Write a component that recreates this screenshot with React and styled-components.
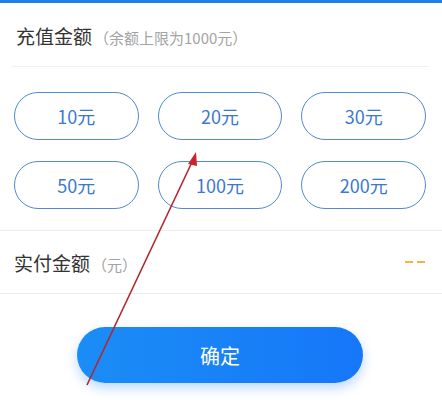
import React from 'react'
import styled, { createGlobalStyle } from 'styled-components'

const GlobalStyle = createGlobalStyle`
  body {
    margin: 0;
    background: #fff;
    font-family: "Noto Sans CJK SC", "Noto Sans", sans-serif;
  }
`

const Page = styled.div`
  position: relative;
  width: 442px;
  height: 414px;
  overflow: hidden;
  background: #fff;
`

const TopLine = styled.div`
  height: 3px;
  background: #1f7fe6;
`

const Header = styled.div`
  display: flex;
  align-items: baseline;
  height: 64px;
  box-sizing: border-box;
  margin: 0 13px 0 12px;
  padding: 19px 0 0 4px;
  border-bottom: 1px solid #f0f0f0;
`

const Title = styled.span`
  font-size: 19px;
  color: #333;
`

const Hint = styled.span`
  font-size: 15px;
  color: #a3a3a3;
  margin-left: 2px;
`

const AmountGrid = styled.div`
  display: grid;
  grid-template-columns: repeat(3, 1fr);
  column-gap: 19px;
  row-gap: 21px;
  padding: 25px 16px 21px 14px;
  border-bottom: 1px solid #ededed;
`

const AmountButton = styled.button`
  height: 48px;
  border: 1.8px solid #5089d6;
  border-radius: 24px;
  background: #fff;
  color: #3b78d0;
  font-family: inherit;
  font-size: 18px;
  padding: 0;
`

const PayRow = styled.div`
  display: flex;
  align-items: center;
  justify-content: space-between;
  height: 62px;
  padding: 0 17px 0 14px;
  border-bottom: 1px solid #ededed;
`

const PayLabel = styled.div`
  display: flex;
  align-items: baseline;
`

const PayValue = styled.span`
  display: flex;
  gap: 4px;
`

const Dash = styled.span`
  width: 8px;
  height: 2px;
  background: #f4b53a;
`

const Footer = styled.div`
  display: flex;
  justify-content: center;
  padding-top: 33px;
  padding-right: 2px;
`

const Confirm = styled.button`
  width: 286px;
  height: 56px;
  border: none;
  border-radius: 28px;
  background: linear-gradient(90deg, #1b8df6 0%, #1677f8 100%);
  box-shadow: 0 5px 12px rgba(30, 130, 250, 0.3);
  color: #fff;
  font-family: inherit;
  font-size: 20px;
`

const Annotation = styled.svg`
  position: absolute;
  left: 0;
  top: 0;
  pointer-events: none;
`

const amounts = [10, 20, 30, 50, 100, 200]

export default function App() {
  return (
    <Page>
      <GlobalStyle />
      <TopLine />
      <Header>
        <Title>充值金额</Title>
        <Hint>（余额上限为1000元）</Hint>
      </Header>
      <AmountGrid>
        {amounts.map(a => (
          <AmountButton key={a}>{a}元</AmountButton>
        ))}
      </AmountGrid>
      <PayRow>
        <PayLabel>
          <Title>实付金额</Title>
          <Hint>（元）</Hint>
        </PayLabel>
        <PayValue>
          <Dash />
          <Dash />
        </PayValue>
      </PayRow>
      <Footer>
        <Confirm>确定</Confirm>
      </Footer>
      <Annotation width="442" height="414" viewBox="0 0 442 414">
        <line x1="87" y1="385" x2="193" y2="160" stroke="#b3262e" strokeWidth="1.6" />
        <polygon points="196,152 188,164 197,166" fill="#c9232b" />
      </Annotation>
    </Page>
  )
}
